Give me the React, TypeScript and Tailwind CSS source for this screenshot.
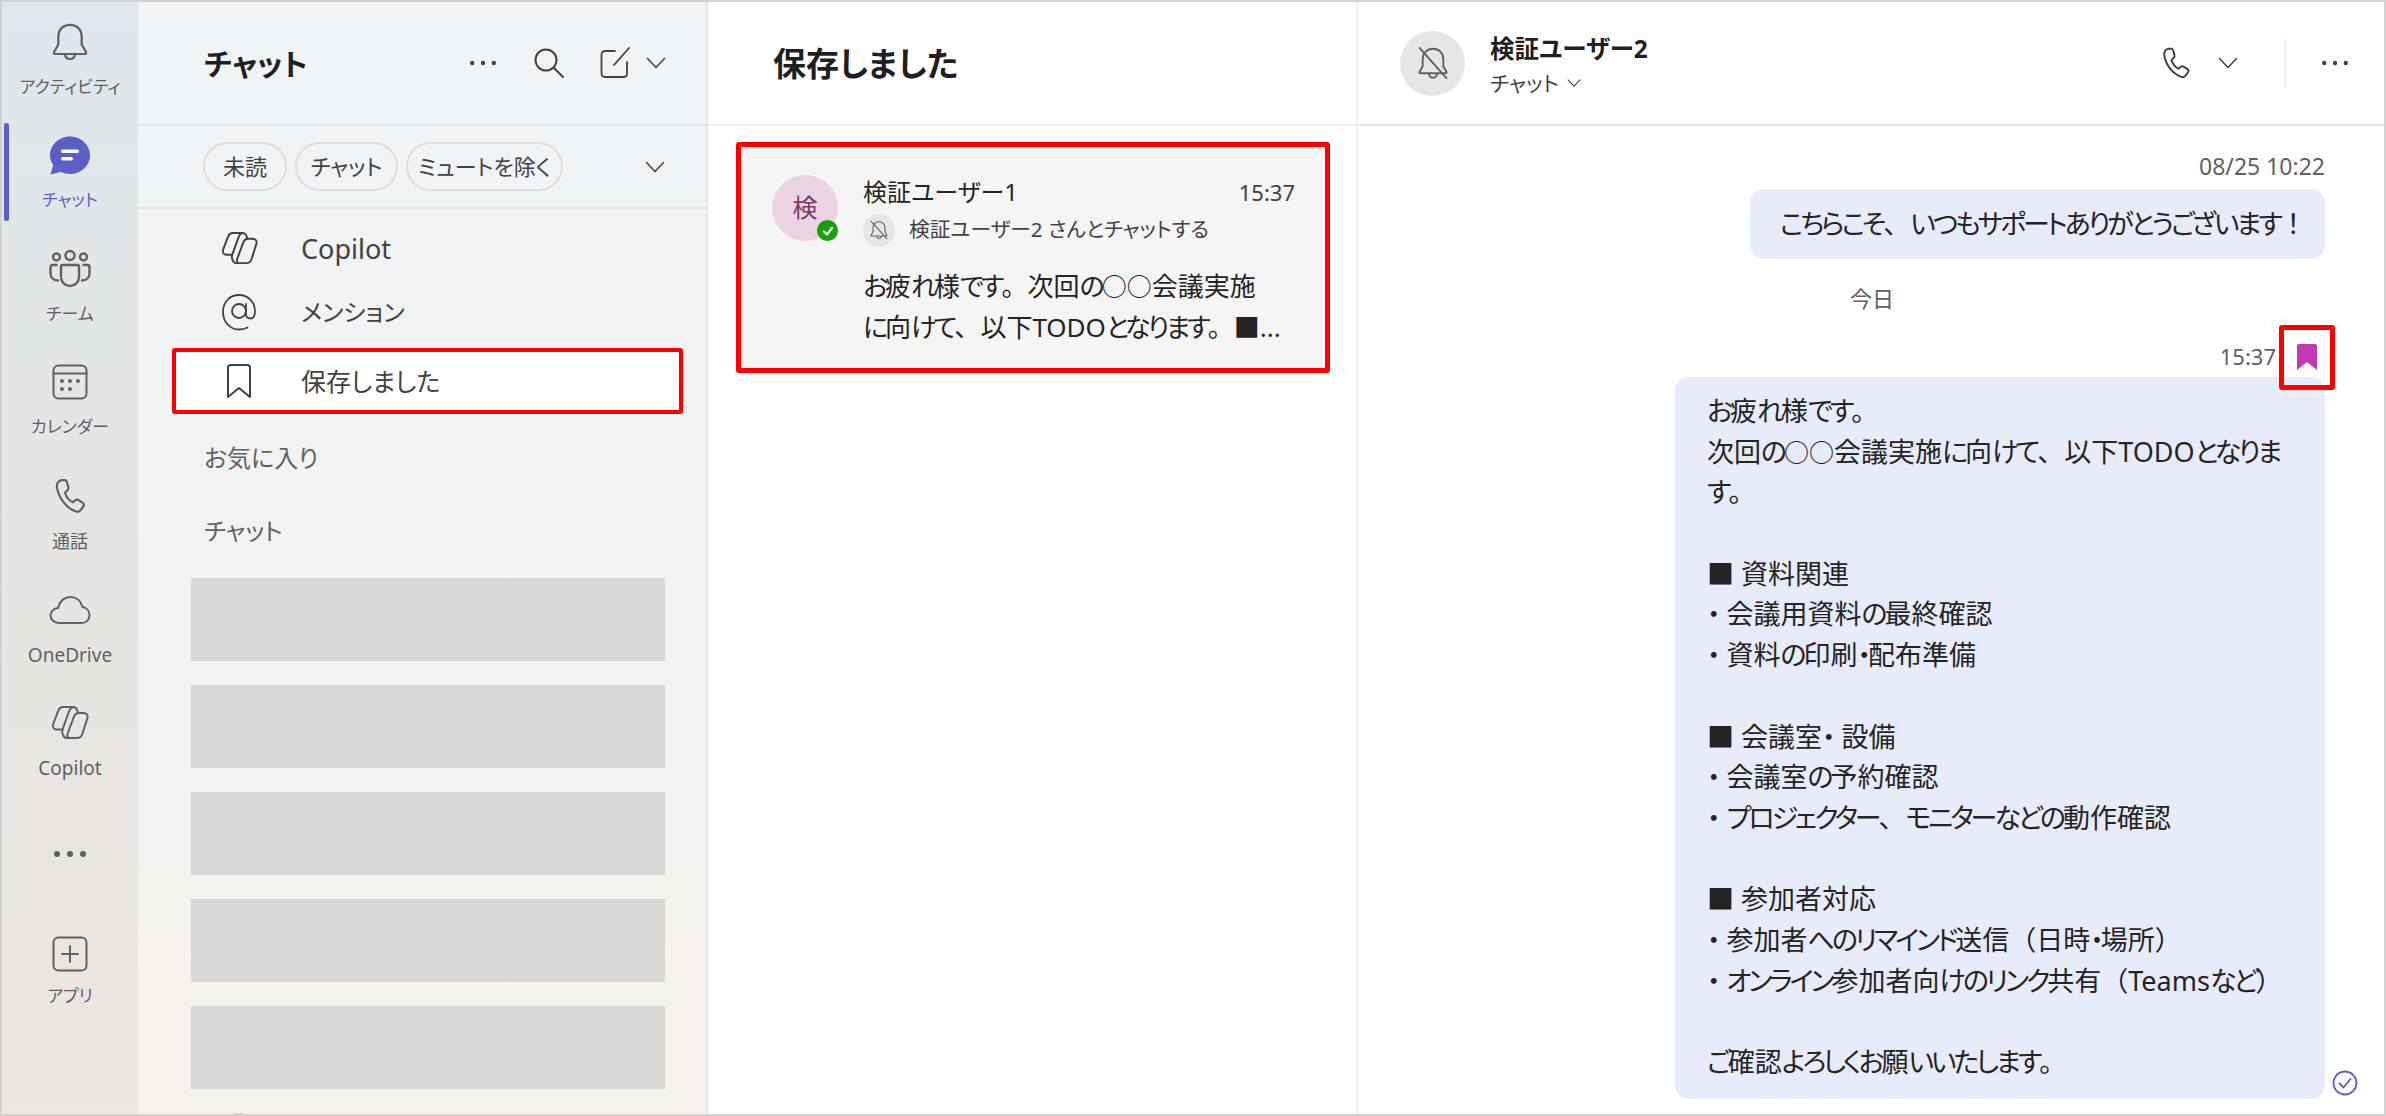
import { ReactNode } from "react";

const Svg = ({ size = 36, vb = 36, className = "", children }: { size?: number; vb?: number; className?: string; children: ReactNode }) => (
  <svg width={size} height={size} viewBox={`0 0 ${vb} ${vb}`} fill="none" stroke="currentColor" strokeWidth={2} strokeLinecap="round" strokeLinejoin="round" className={className}>
    {children}
  </svg>
);

const BellIcon = ({ size = 40 }: { size?: number }) => (
  <Svg size={size}>
    <path d="M18 2.500c-6.300 0-10.500 4.500-10.500 10.600v7.200L3.600 27c-.5.900.1 1.800 1 1.800h26.800c.9 0 1.500-.9 1-1.800l-3.900-6.700v-7.200C28.500 7 24.300 2.500 18 2.500Z" />
    <path d="M13.500 29c.3 2.700 2.200 4.400 4.500 4.400s4.200-1.700 4.500-4.400" />
  </Svg>
);

const ChatIcon = () => (
  <svg width={42} height={41} viewBox="0 0 42 40">
    <path d="M21 1c11 0 20 8.500 20 18.800S32 38.600 21 38.600c-3.300 0-6.400-.7-9.200-2L1.500 39 4.200 29.500C2.200 26.800 1 23.500 1 19.800 1 9.500 10 1 21 1Z" fill="#5b5fc7" />
    <rect x="12" y="14" width="18" height="3.600" rx="1.800" fill="#fff" />
    <rect x="12" y="21.500" width="12" height="3.600" rx="1.800" fill="#fff" />
  </svg>
);

const TeamIcon = () => (
  <Svg size={42} vb={42} className="[stroke-width:2.400]">
    <circle cx="21" cy="7.500" r="4.500" />
    <circle cx="7.500" cy="9" r="3.500" />
    <circle cx="34.500" cy="9" r="3.500" />
    <path d="M13.500 17h15c.8 0 1.500.7 1.500 1.500V29c0 5-4 9-9 9s-9-4-9-9V18.500c0-.8.700-1.500 1.500-1.500Z" />
    <path d="M7.500 17H3.500C2.300 17 1.500 17.800 1.500 19v6.500c0 4 3 7 7.500 7" />
    <path d="M34.500 17h4c1.200 0 2 .8 2 2v6.500c0 4-3 7-7.500 7" />
  </Svg>
);

const CalendarIcon = () => (
  <Svg>
    <rect x="1.500" y="1.500" width="33" height="33" rx="5" />
    <path d="M1.500 9.500h33" />
    <g fill="currentColor" stroke="none">
      <circle cx="10" cy="17" r="2" /><circle cx="18" cy="17" r="2" /><circle cx="26" cy="17" r="2" />
      <circle cx="10" cy="25" r="2" /><circle cx="18" cy="25" r="2" />
    </g>
  </Svg>
);

const PhoneIcon = ({ size = 40 }: { size?: number }) => (
  <Svg size={size} vb={24} className="[stroke-width:1.300]">
    <path d="M7 2.500h1.800c.7 0 1.100.4 1.300 1l.9 3.300c.2.700 0 1.300-.5 1.700L9 10c.6 2.200 2.500 4.700 4.700 5.800l1.600-1.300c.5-.4 1.100-.5 1.700-.1l2.700 1.700c.7.400.9 1.200.4 1.900l-1.500 2.200c-.7 1-2 1.500-3.200 1C9.500 19.100 5.200 13 4.200 7 3.800 4.700 5 2.800 7 2.500Z" />
  </Svg>
);

const CloudIcon = () => (
  <Svg size={42} vb={42}>
    <path d="M10 34c-4.800 0-8.500-3.200-8.500-7.500 0-4 3.300-7.200 7.500-7.500C11 12 15.800 8 21.500 8c6 0 10.500 4 12 10 4 .6 7 4 7 8.500 0 4.300-3.500 7.500-8 7.500H10Z" />
  </Svg>
);

const CopilotIcon = ({ size = 38 }: { size?: number }) => (
  <Svg size={size} vb={38} className="[stroke-width:2]">
    <path d="M12 3h10c2 0 3.500 1 4.100 3l1 3" />
    <path d="M12 3c-2.300 0-3.700 1.200-4.500 3.200L2.200 20c-1.200 3 .5 5.500 3.500 5.500h5.800" />
    <path d="M22 3c-2 .5-3 2-4 4.500l-6.500 18c-.8 2.500-.3 4.500 1 6.500" />
    <path d="M27 9h5.500c3 0 4.800 2.400 3.800 5.500l-5 15.500c-.8 2.500-2.800 4-5.500 4H15.500c-1.500 0-2.500-.8-3-2" />
    <path d="M27 9c-2 .4-3.300 1.600-4 3.500L16.500 30c-.7 2 0 3.200 1.500 4" />
  </Svg>
);

const PlusIcon = () => (
  <Svg>
    <rect x="1.500" y="1.500" width="33" height="33" rx="5" />
    <path d="M18 10v16M10 18h16" />
  </Svg>
);

const Chevron = ({ size = 20 }: { size?: number }) => (
  <svg width={size} height={size} viewBox="0 0 20 20" fill="none" stroke="currentColor" strokeWidth={1.500} strokeLinecap="round" strokeLinejoin="round">
    <path d="M1.500 5.500 10 14.500l8.500-9" />
  </svg>
);

const Dots = ({ width = 26, r = 2.200 }: { width?: number; r?: number }) => (
  <svg width={width} height={6} viewBox={`0 0 ${width} 6`} fill="currentColor">
    <circle cx={r} cy="3" r={r} />
    <circle cx={width / 2} cy="3" r={r} />
    <circle cx={width - r} cy="3" r={r} />
  </svg>
);

const MutedBell = ({ size }: { size: number }) => (
  <Svg size={size} vb={24} className="[stroke-width:1.200]">
    <path d="M12 3c-3.800 0-6.500 2.800-6.500 6.500v4.500L3.500 17.500c-.3.500 0 1 .6 1h15.800c.6 0 .9-.5.6-1l-2-3.500V9.500C18.500 5.800 15.800 3 12 3Z" />
    <path d="M9.500 19c.2 1.400 1.200 2.300 2.500 2.300s2.300-.9 2.500-2.300" />
    <path d="M3.500 2.500 20.500 21.500" />
  </Svg>
);

// the original font has narrow kana next to full width kanji and punctuation
const Jp = ({ text }: { text: string }) => (
  <>
    {text.split(/(^・|○+|[\u3041-\u30ff]+|[。、！（）])/).map((part, i) => {
      if (i % 2 === 0) return part;
      if (i === 1 && part === "・") return <span key={i} className="tracking-[6px]">{part}</span>;
      if (part[0] === "○") return <span key={i} className="text-[25px]">{part}</span>;
      if (/[。、！（）]/.test(part)) return <span key={i} className="[font-feature-settings:normal]">{part}</span>;
      return <span key={i} className="tracking-[-3px]">{part}</span>;
    })}
  </>
);

const railItems = [
  { label: "アクティビティ", size: "text-[17px]", icon: <BellIcon /> },
  { label: "チャット", size: "text-[17px]", icon: <ChatIcon />, active: true },
  { label: "チーム", size: "text-[17px]", icon: <TeamIcon /> },
  { label: "カレンダー", size: "text-[17px]", icon: <CalendarIcon /> },
  { label: "通話", size: "text-[18px]", icon: <PhoneIcon /> },
  { label: "OneDrive", size: "text-[19px]", icon: <CloudIcon /> },
  { label: "Copilot", size: "text-[19px]", icon: <CopilotIcon /> },
];

const Rail = () => (
  <div className="w-[136px] shrink-0 bg-gradient-to-b from-[#dfe8ed] via-[#e6e5e3] to-[#ece6e1] flex flex-col text-[#616161]">
    {railItems.map((item) => (
      <div key={item.label} className="relative h-[113.600px] shrink-0 flex flex-col items-center justify-end pb-[17px]">
        {item.active && <div className="absolute left-[2px] top-[7px] w-[5px] h-[98px] rounded-full bg-[#5b5fc7]" />}
        <div className="h-[42px] flex items-center justify-center mb-[12px]">{item.icon}</div>
        <span className={`${item.size} leading-[24px] whitespace-nowrap ${item.active ? "text-[#5b5fc7]" : ""}`}>{item.label}</span>
      </div>
    ))}
    <div className="flex justify-center mt-[54px]"><Dots width={32} r={3} /></div>
    <div className="flex flex-col items-center mt-[79px] gap-[12px]">
      <PlusIcon />
      <span className="text-[17px] leading-[24px]">アプリ</span>
    </div>
  </div>
);

const SideRow = ({ icon, label, size, boxed }: { icon: ReactNode; label: string; size: string; boxed?: boolean }) => (
  <div className={`flex items-center ml-[34px] mr-[23px] ${boxed ? "h-[66px] bg-white border-[4px] border-[#ff0000] rounded-[3px]" : "h-[63px]"}`}>
    <div className={`w-[38px] flex justify-center ${boxed ? "ml-[44px]" : "ml-[48px]"} text-[#424242]`}>{icon}</div>
    <span className={`ml-[43px] ${size} leading-[32px] text-[#424242]`}>{label}</span>
  </div>
);

const Pill = ({ label, width }: { label: string; width: number }) => (
  <div style={{ width }} className="h-[49px] rounded-full border-2 border-[#dcdcdc] flex items-center justify-center text-[22px] text-[#424242] whitespace-nowrap">
    {label}
  </div>
);

const Sidebar = () => (
  <div className="w-[570px] shrink-0 h-full overflow-hidden border-r-2 border-[#e6e6e6] bg-gradient-to-b from-[#f0f4f7] via-[#f2f2f1] to-[#f5f1ed] flex flex-col">
    <div className="h-[124px] shrink-0 border-b-2 border-[#e3e5e6] flex items-center pl-[66px] pr-[40px]">
      <span className="text-[30px] font-bold text-[#1f1f1f] flex-1">チャット</span>
      <div className="text-[#424242] mr-[38px]"><Dots /></div>
      <svg width={30} height={30} viewBox="0 0 30 30" fill="none" stroke="#424242" strokeWidth={2} strokeLinecap="round" className="mr-[36px]">
        <circle cx="12" cy="12" r="10.500" /><path d="M20 20l9 9" />
      </svg>
      <svg width={30} height={32} viewBox="0 0 30 32" fill="none" stroke="#424242" strokeWidth={1.800} strokeLinecap="round" strokeLinejoin="round" className="mr-[16px]">
        <path d="M15 4H5C3 4 1.500 5.500 1.500 7.500v19C1.500 28.500 3 30 5 30h19c2 0 3-1.500 3-3.500V15" /><path d="M14 18 29 1" />
      </svg>
      <div className="text-[#424242]"><Chevron /></div>
    </div>
    <div className="h-[83px] shrink-0 border-b-2 border-[#e3e5e6] flex items-center pl-[65px] pr-[41px] gap-[8px]">
      <Pill label="未読" width={84} />
      <Pill label="チャット" width={103} />
      <Pill label="ミュートを除く" width={157} />
      <div className="ml-auto text-[#424242]"><Chevron /></div>
    </div>
    <div className="mt-[8px]">
      <SideRow icon={<CopilotIcon size={37} />} label="Copilot" size="text-[27px]" />
      <SideRow
        label="メンション"
        size="text-[24px]"
        icon={
          <svg width={36} height={38} viewBox="0 0 36 38" fill="none" stroke="#424242" strokeWidth={1.800} strokeLinecap="round">
            <circle cx="18" cy="18" r="7" />
            <path d="M25 11v10c0 3 2 4.500 4.500 4.500S34 23 34 18.500C34 9 27 2 18 2S2 9 2 19s7 17.500 16 17.500c3.500 0 6-.7 8.500-2" />
          </svg>
        }
      />
      <div className="mt-[5px]">
        <SideRow
          boxed
          label="保存しました"
          size="text-[25px]"
          icon={
            <svg width={26} height={36} viewBox="0 0 26 36" fill="none" stroke="#424242" strokeWidth={2} strokeLinejoin="round">
              <path d="M2 34V4.500C2 3 3 2 4.500 2h17C23 2 24 3 24 4.500V34L13 25 2 34Z" />
            </svg>
          }
        />
      </div>
    </div>
    <div className="pl-[66px] mt-[28px] text-[24px] leading-[32px] text-[#616161]">お気に入り</div>
    <div className="pl-[66px] mt-[41px] text-[24px] leading-[32px] text-[#616161]">チャット</div>
    <div className="ml-[53px] mt-[31px] flex flex-col gap-[24px]">
      {[0, 1, 2, 3, 4].map((i) => (
        <div key={i} className="w-[474px] h-[83px] shrink-0 bg-[#d8d8d8]" />
      ))}
      <div className="ml-[25px] w-[44px] h-[44px] shrink-0 rounded-full bg-[#c9cbf0]" />
    </div>
  </div>
);

const SavedPanel = () => (
  <div className="w-[650px] shrink-0 h-full border-r-2 border-[#f0f0f0] bg-white flex flex-col">
    <div className="h-[124px] shrink-0 border-b-2 border-[#f0f0f0] flex items-center pl-[65px] pt-[2px]">
      <span className="text-[33px] font-bold text-[#1f1f1f]">保存しました</span>
    </div>
    <div className="mt-[16px] ml-[28px] w-[594px] h-[231px] rounded-[3px] border-[5px] border-[#ff0000] bg-[#f5f5f5] flex pt-[28px] pl-[31px] pr-[30px]">
      <div className="relative w-[66px] h-[66px] shrink-0 rounded-full bg-[#ecd3e2] flex items-center justify-center text-[25px] text-[#7a3b63]">
        検
        <div className="absolute right-0 bottom-0 w-[21px] h-[21px] rounded-full bg-[#13a10e] border-0 flex items-center justify-center">
          <svg width={12} height={12} viewBox="0 0 12 12" fill="none" stroke="#fff" strokeWidth={2.200} strokeLinecap="round" strokeLinejoin="round">
            <path d="M2 6.500 5 9.500 10 3" />
          </svg>
        </div>
      </div>
      <div className="ml-[25px] flex-1 min-w-0">
        <div className="flex items-center justify-between h-[34px]">
          <span className="text-[24px] text-[#242424]">検証ユーザー1</span>
          <span className="text-[22px] text-[#424242]">15:37</span>
        </div>
        <div className="flex items-center h-[34px] mt-[4px]">
          <div className="w-[32px] h-[33px] rounded-full bg-[#e6e6e6] flex items-center justify-center text-[#616161]"><MutedBell size={22} /></div>
          <span className="ml-[14px] text-[20.700px] text-[#424242] whitespace-nowrap">検証ユーザー2 さんとチャットする</span>
        </div>
        <div className="mt-[19px] text-[26px] leading-[41px] text-[#242424] whitespace-nowrap">
          <div><Jp text="お疲れ様です。次回の○○会議実施" /></div>
          <div><Jp text="に向けて、以下TODOとなります。■..." /></div>
        </div>
      </div>
    </div>
  </div>
);

const messageLines = [
  "お疲れ様です。",
  "次回の○○会議実施に向けて、以下TODOとなりま",
  "す。",
  "",
  "■ 資料関連",
  "・会議用資料の最終確認",
  "・資料の印刷・配布準備",
  "",
  "■ 会議室・設備",
  "・会議室の予約確認",
  "・プロジェクター、モニターなどの動作確認",
  "",
  "■ 参加者対応",
  "・参加者へのリマインド送信（日時・場所）",
  "・オンライン参加者向けのリンク共有（Teamsなど）",
  "",
  "ご確認よろしくお願いいたします。",
];

const ChatPanel = () => (
  <div className="flex-1 min-w-0 h-full bg-white flex flex-col">
    <div className="h-[124px] shrink-0 border-b-2 border-[#e6e6e6] flex items-center pl-[42px] pr-[36px]">
      <div className="w-[65px] h-[65px] rounded-full bg-[#e6e6e6] flex items-center justify-center text-[#616161]"><MutedBell size={38} /></div>
      <div className="ml-[25px] flex-1 mt-[3px]">
        <div className="text-[24.500px] leading-[34px] font-bold text-[#1f1f1f]">検証ユーザー2</div>
        <div className="flex items-center gap-[8px] text-[21px] leading-[30px] text-[#424242] mt-[2px]">
          チャット
          <Chevron size={14} />
        </div>
      </div>
      <div className="text-[#424242]"><PhoneIcon size={36} /></div>
      <div className="ml-[24px] text-[#424242]"><Chevron /></div>
      <div className="ml-[46px] w-[2px] h-[49px] bg-[#efefef]" />
      <div className="ml-[36px] text-[#424242]"><Dots /></div>
    </div>
    <div className="flex-1 min-h-0 flex flex-col pr-[59px] relative">
      <div className="text-right text-[23px] leading-[30px] text-[#616161] mt-[25px]">08/25 10:22</div>
      <div className="self-end w-[575px] h-[70px] mt-[8px] rounded-[14px] bg-[#e8ebfa] flex items-center pl-[30px] text-[27px] text-[#242424] whitespace-nowrap">
        <span><Jp text="こちらこそ、いつもサポートありがとうございます！" /></span>
      </div>
      <div className="ml-[492px] mt-[24px] text-[22px] leading-[30px] text-[#616161]">今日</div>
      <div className="self-end flex items-center mt-[28px] h-[30px] relative">
        <span className="text-[22px] text-[#616161] mr-[49px]">15:37</span>
        <div className="absolute right-[-10px] top-[-16px] w-[56px] h-[65px] border-[5px] border-[#ff0000] rounded-[3px] z-10 flex justify-center pt-[14px]">
          <svg width={20} height={26} viewBox="0 0 20 26"><path d="M0 2C0 .9.900 0 2 0h16c1.100 0 2 .9 2 2v24l-10-8-10 8V2Z" fill="#c239b3" /></svg>
        </div>
      </div>
      <div className="self-end w-[650px] h-[722px] mt-[6px] rounded-[14px] bg-[#e8ebfa] pl-[32px] pt-[14px] text-[27px] leading-[40.700px] text-[#242424] whitespace-nowrap">
        {messageLines.map((line, i) => (
          <div key={i} className="h-[40.700px]"><Jp text={line} /></div>
        ))}
      </div>
      <svg width={26} height={26} viewBox="0 0 26 26" fill="none" stroke="#5b5fc7" strokeWidth={1.800} strokeLinecap="round" strokeLinejoin="round" className="absolute right-[26px] bottom-[18px]">
        <circle cx="13" cy="13" r="11.500" /><path d="M7.500 13.500 11.500 17.500 18.500 9" />
      </svg>
    </div>
  </div>
);

export default function App() {
  return (
    <div className="w-[2386px] h-[1116px] overflow-hidden border-2 border-[#d2d2d2] flex bg-white font-['Noto_Sans','Noto_Sans_CJK_JP',sans-serif] [font-feature-settings:'palt']">
      <Rail />
      <Sidebar />
      <SavedPanel />
      <ChatPanel />
    </div>
  );
}
